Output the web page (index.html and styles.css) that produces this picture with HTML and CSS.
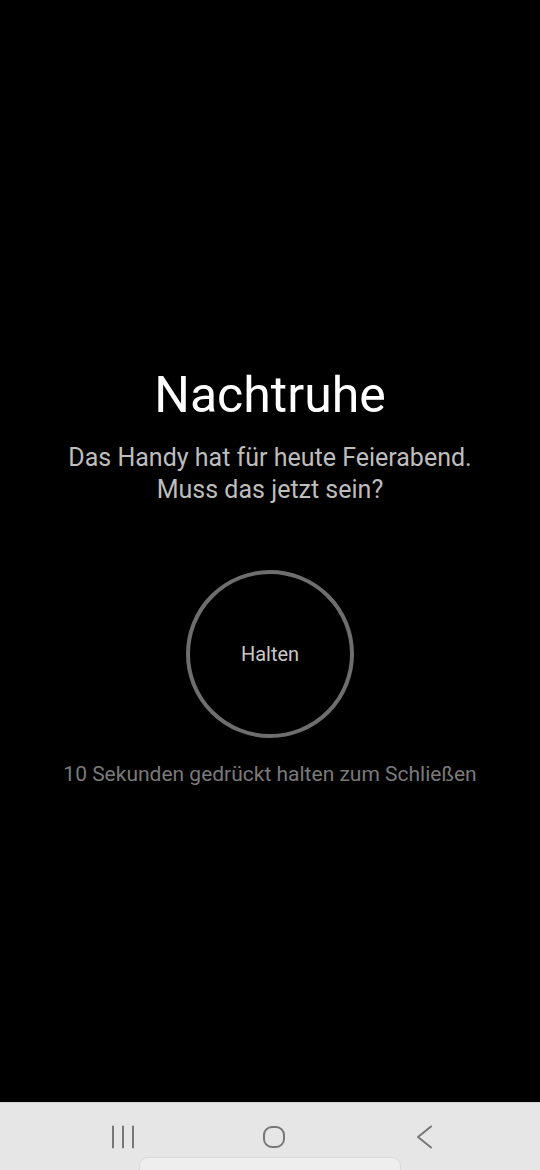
FILE: index.html
```html
<!DOCTYPE html>
<html lang="de">
<head>
<meta charset="utf-8">
<meta name="viewport" content="width=540">
<link rel="stylesheet" href="styles.css">
<title>Nachtruhe</title>
</head>
<body>
<main class="screen">
  <section class="content">
    <h1 class="title">Nachtruhe</h1>
    <p class="subtitle">Das Handy hat für heute Feierabend.<br>Muss das jetzt sein?</p>
    <button class="hold" type="button">Halten</button>
    <p class="hint">10 Sekunden gedrückt halten zum Schließen</p>
  </section>
</main>
<nav class="navbar">
  <div class="nav-icons">
    <svg class="nav-icon" viewBox="0 0 24 24" width="24" height="24" aria-hidden="true">
      <path d="M2 1.5v21M12 1.5v21M22 1.5v21" stroke="#777" stroke-width="2" fill="none" stroke-linecap="round"/>
    </svg>
    <svg class="nav-icon" viewBox="0 0 24 24" width="24" height="24" aria-hidden="true">
      <rect x="2" y="2" width="20" height="20" rx="8" ry="8" stroke="#777" stroke-width="2" fill="none"/>
    </svg>
    <svg class="nav-icon" viewBox="0 0 24 24" width="24" height="24" aria-hidden="true">
      <path d="M18 1.5L5 12l13 10.5" stroke="#777" stroke-width="2" fill="none" stroke-linecap="round" stroke-linejoin="round"/>
    </svg>
  </div>
  <div class="nav-tab"></div>
</nav>
</body>
</html>
```
FILE: styles.css
```css
html, body {
  margin: 0;
  padding: 0;
  background: #000;
}
body {
  width: 540px;
  height: 1170px;
  overflow: hidden;
  font-family: Roboto, "Liberation Sans", Arial, sans-serif;
  display: flex;
  flex-direction: column;
}
.screen {
  height: 1102px;
  flex-shrink: 0;
  background: #000;
}
.content {
  display: flex;
  flex-direction: column;
  align-items: center;
  padding-top: 366px;
}
.title {
  margin: 0;
  font-size: 50px;
  line-height: 58px;
  font-weight: 400;
  color: #fff;
}
.subtitle {
  margin: 18px 0 0;
  font-size: 25px;
  line-height: 32px;
  color: #bdbdbd;
  text-align: center;
}
.hold {
  margin-top: 64px;
  width: 168px;
  height: 168px;
  box-sizing: border-box;
  border: 4px solid #6e6e6e;
  border-radius: 50%;
  background: transparent;
  color: #c8c8c8;
  font-family: inherit;
  font-size: 20px;
  padding: 0;
}
.hint {
  margin: 24px 0 0;
  font-size: 21px;
  line-height: 24px;
  color: #7a7a7a;
}
.navbar {
  flex: 1;
  min-height: 0;
  overflow: hidden;
  background: #e6e6e6;
  border-top: 1px solid #d4d4d4;
  display: flex;
  flex-direction: column;
  align-items: center;
}
.nav-icons {
  display: flex;
  justify-content: space-between;
  width: 326px;
  margin-top: 22px;
  margin-left: 7px;
}
.nav-icon {
  display: block;
  flex-shrink: 0;
}
.nav-tab {
  flex-shrink: 0;
  margin-top: 8px;
  width: 260px;
  height: 20px;
  background: #eeeeee;
  border: 1px solid #dadada;
  border-radius: 9px;
}
```
